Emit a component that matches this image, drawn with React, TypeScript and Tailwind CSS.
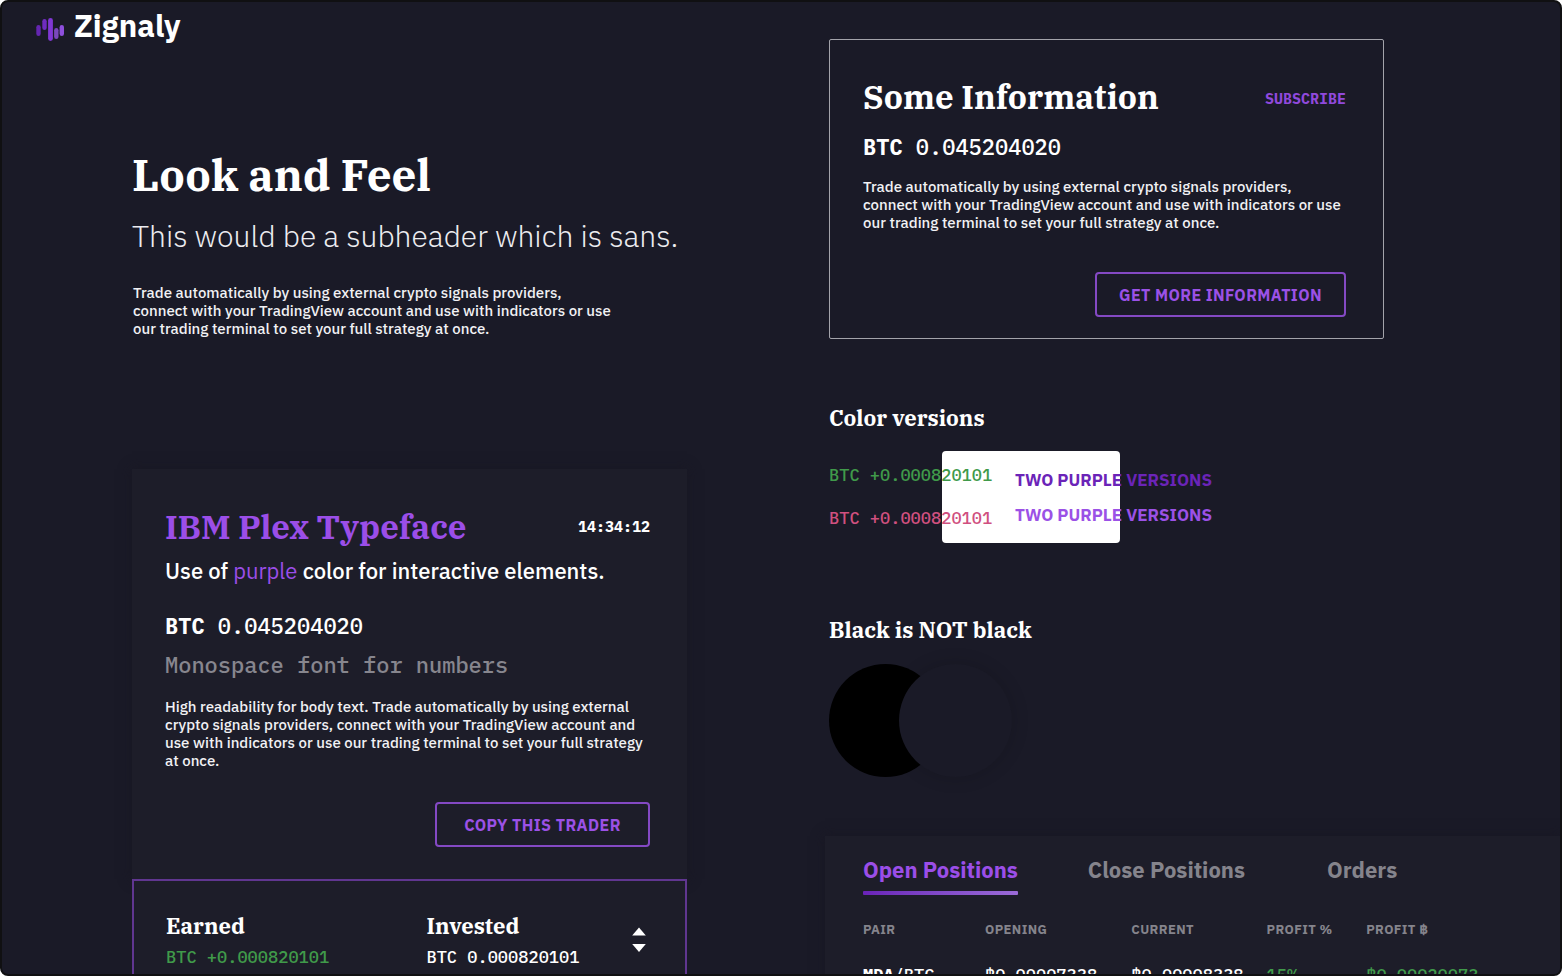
import React from "react";

const serif = "font-['IBM_Plex_Serif','DejaVu_Serif_Condensed','DejaVu_Serif',serif] font-bold";
const mono = "font-['IBM_Plex_Mono','Liberation_Mono',monospace]";

function Logo() {
  return (
    <svg viewBox="0 0 28 24" className="mt-[10px] h-6 w-7" aria-hidden="true">
      <rect x="0.3" y="7" width="4.400" height="11" rx="2.200" fill="#6426b0" />
      <rect x="6.300" y="1" width="4.400" height="11" rx="2.200" fill="#6f2cc0" />
      <rect x="12.100" y="0" width="4.800" height="23" rx="2.400" fill="#8038d4" />
      <rect x="18.100" y="10" width="4.400" height="11" rx="2.200" fill="#7a48bc" />
      <rect x="23.600" y="7" width="4.400" height="11" rx="2.200" fill="#8e4fdd" />
    </svg>
  );
}

function OutlineButton({ children }: { children: React.ReactNode }) {
  return (
    <button
      type="button"
      className="h-[45px] min-w-[215px] rounded-[4px] border-2 border-[#8449c4] px-[22px] text-[16px] font-bold tracking-wide text-[#9b51e6]"
    >
      {children}
    </button>
  );
}

function Balance() {
  return (
    <p className={`${mono} text-[22px] leading-8 font-medium`}>
      <strong className="font-bold">BTC</strong> 0.045204020
    </p>
  );
}

const body = "text-[15px] leading-[18px] font-medium text-[#f1f1f4]";

function Intro() {
  return (
    <section className="pt-[101px]">
      <h1 className={`${serif} text-[44px] leading-[48px]`}>Look and Feel</h1>
      <p className="mt-[17px] text-[30px] leading-10 font-light text-[#ececf0]">
        This would be a subheader which is sans.
      </p>
      <p className={`${body} mt-7 max-w-[480px] pl-px`}>
        Trade automatically by using external crypto signals providers, connect with your TradingView account and use
        with indicators or use our trading terminal to set your full strategy at once.
      </p>
    </section>
  );
}

function TypefaceCard() {
  return (
    <section className="mt-[131px] bg-[#1d1d29] pt-[38px] pr-[37px] pb-8 pl-[33px] shadow-[0_0_12px_rgba(24,23,34,0.8)]">
      <div className="flex items-center justify-between">
        <h2 className={`${serif} text-[33px] leading-10 text-[#9b4ee8]`}>IBM Plex Typeface</h2>
        <time className={`${mono} text-[15px] leading-6 font-bold`}>14:34:12</time>
      </div>
      <p className="mt-2 text-[22px] leading-8 font-medium">
        Use of{" "}
        <a href="#purple" className="font-normal text-[#9b4ee8]">
          purple
        </a>{" "}
        color for interactive elements.
      </p>
      <div className="mt-[23px]">
        <Balance />
      </div>
      <p className={`${mono} mt-[7px] text-[22px] leading-8 font-medium text-[#87868e]`}>Monospace font for numbers</p>
      <p className={`${body} mt-[17px]`}>
        High readability for body text. Trade automatically by using external crypto signals providers, connect with
        your TradingView account and use with indicators or use our trading terminal to set your full strategy at once.
      </p>
      <div className="mt-8 flex justify-end">
        <OutlineButton>COPY THIS TRADER</OutlineButton>
      </div>
    </section>
  );
}

function EarningsCard() {
  return (
    <section className="flex border-2 border-[#603690] bg-[#1d1d29] pt-[29px] pr-[38px] pb-8 pl-8">
      <div className="flex-[261]">
        <h3 className={`${serif} text-[22px] leading-8`}>Earned</h3>
        <p className={`${mono} text-[17px] leading-[30px] font-medium text-[#409a4a]`}>BTC +0.000820101</p>
      </div>
      <div className="flex-[205]">
        <h3 className={`${serif} text-[22px] leading-8`}>Invested</h3>
        <p className={`${mono} text-[17px] leading-[30px] font-medium`}>BTC 0.000820101</p>
      </div>
      <button type="button" aria-label="Switch values" className="mt-4 h-7 w-4">
        <svg viewBox="0 0 16 28" className="h-7 w-4" fill="#ffffff">
          <path d="M8 1.500 14.800 9.500H1.200Z" />
          <path d="M8 26 14.800 18H1.200Z" />
        </svg>
      </button>
    </section>
  );
}

function InfoCard() {
  return (
    <section className="max-w-[555px] rounded-[2px] border border-[#a3a3aa] pt-[37px] pr-[37px] pb-[21px] pl-[33px]">
      <div className="flex items-center justify-between">
        <h2 className={`${serif} text-[33px] leading-10`}>Some Information</h2>
        <a href="#subscribe" className={`${mono} mt-1 text-[15px] leading-6 font-bold text-[#9049dc]`}>
          SUBSCRIBE
        </a>
      </div>
      <div className="mt-[14px]">
        <Balance />
      </div>
      <p className={`${body} mt-[15px]`}>
        Trade automatically by using external crypto signals providers, connect with your TradingView account and use
        with indicators or use our trading terminal to set your full strategy at once.
      </p>
      <div className="mt-10 flex justify-end">
        <OutlineButton>GET MORE INFORMATION</OutlineButton>
      </div>
    </section>
  );
}

function ColorVersions() {
  return (
    <section className="mt-[63px]">
      <h3 className={`${serif} text-[22px] leading-8`}>Color versions</h3>
      <div className="relative mt-[17px] flex h-[92px]">
        <div className="absolute inset-y-0 left-[113px] w-[178px] rounded-[4px] bg-white" />
        <div className={`${mono} relative w-[186px] pt-[7px] text-[17px] leading-[34px] font-medium`}>
          <p className="text-[#409a4a]">BTC +0.000820101</p>
          <p className="mt-[9px] text-[#d0507f]">BTC +0.000820101</p>
        </div>
        <div className="relative pt-3 text-[17px] leading-[34px] font-bold">
          <p className="text-[#6b24b8]">TWO PURPLE VERSIONS</p>
          <p className="mt-px text-[#9b51e6]">TWO PURPLE VERSIONS</p>
        </div>
      </div>
    </section>
  );
}

function BlackIsNotBlack() {
  return (
    <section className="mt-[71px]">
      <h3 className={`${serif} text-[22px] leading-8`}>Black is NOT black</h3>
      <div className="mt-[18px] flex">
        <div className="size-[113px] rounded-full bg-black" />
        <div className="-ml-[43px] size-[113px] rounded-full bg-[#1a1a27] shadow-[0_0_18px_rgba(0,0,0,0.16)]" />
      </div>
    </section>
  );
}

function Positions() {
  const head = "pb-[23px] text-left text-[13px] leading-5 font-bold";
  return (
    <section className="-ml-1 mt-[59px] bg-[#1d1d29] pt-[18px] pl-[38px] shadow-[0_0_12px_rgba(24,23,34,0.8)]">
      <div role="tablist" className="flex gap-[70px] text-[22px] leading-8 font-bold text-[#85848c]">
        <button type="button" role="tab" aria-selected="true" className="text-[#9b4ee8]">
          Open Positions
          <span className="mt-[5px] block h-1 rounded-[1px] bg-linear-to-r from-[#6a22b8] to-[#9b6bd8]" />
        </button>
        <button type="button" role="tab" aria-selected="false" className="pb-[9px]">
          Close Positions
        </button>
        <button type="button" role="tab" aria-selected="false" className="ml-3 pb-[9px]">
          Orders
        </button>
      </div>
      <table className="mt-[25px] w-full table-fixed border-collapse">
        <colgroup>
          <col className="w-[17.500%]" />
          <col className="w-[21%]" />
          <col className="w-[19.400%]" />
          <col className="w-[14.300%]" />
          <col />
        </colgroup>
        <thead className="tracking-wide text-[#85848c]">
          <tr>
            <th className={head}>PAIR</th>
            <th className={head}>OPENING</th>
            <th className={head}>CURRENT</th>
            <th className={head}>PROFIT %</th>
            <th className={head}>PROFIT ฿</th>
          </tr>
        </thead>
        <tbody className={`${mono} text-[17px] leading-6 font-medium`}>
          <tr>
            <td>
              <strong>MDA</strong>/BTC
            </td>
            <td>฿0.00007338</td>
            <td>฿0.00008338</td>
            <td className="text-[#409a4a]">15%</td>
            <td className="text-[#409a4a]">฿0.00020073</td>
          </tr>
        </tbody>
      </table>
    </section>
  );
}

export default function App() {
  return (
    <div className="h-screen bg-white font-['IBM_Plex_Sans','Noto_Sans',sans-serif] text-white">
      <div className="h-full overflow-hidden rounded-[8px] border-2 border-[#101012] bg-[#1a1a27]">
        <div className="grid grid-cols-[827fr_731fr]">
          <div>
            <header className="flex h-12 items-start gap-[10px] pt-[6px] pl-[34px]">
              <Logo />
              <span className="text-[31px] leading-9 font-bold">Zignaly</span>
            </header>
            <main className="pl-[130px]">
              <Intro />
              <div className="max-w-[555px]">
                <TypefaceCard />
                <EarningsCard />
              </div>
            </main>
          </div>
          <div className="pt-[37px]">
            <InfoCard />
            <ColorVersions />
            <BlackIsNotBlack />
            <Positions />
          </div>
        </div>
      </div>
    </div>
  );
}
